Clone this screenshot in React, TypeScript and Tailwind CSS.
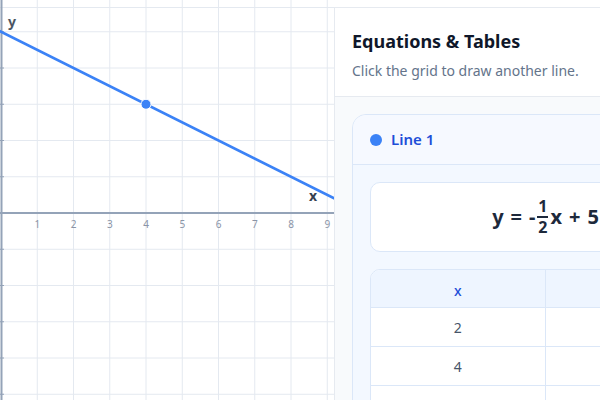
import React from "react";

const U = 36.25;
const X0 = 1;
const Y0 = 213;
const px = (x: number) => X0 + x * U;
const py = (y: number) => Y0 - y * U;

function Graph() {
  const xs = Array.from({ length: 10 }, (_, i) => i + 1);
  const ys = Array.from({ length: 11 }, (_, i) => i - 5).filter((v) => v !== 0);
  const f = (x: number) => -0.5 * x + 5;
  const xa = -0.1;
  const xb = 9.3;
  return (
    <svg width={334} height={400} className="block shrink-0">
      <rect x={0} y={0} width={334} height={400} fill="#ffffff" />
      {xs.map((k) => (
        <line key={`v${k}`} x1={px(k)} y1={0} x2={px(k)} y2={400} stroke="#e4e9f0" strokeWidth={1} />
      ))}
      {ys.map((k) => (
        <line key={`h${k}`} x1={0} y1={py(k)} x2={334} y2={py(k)} stroke="#e4e9f0" strokeWidth={1} />
      ))}
      <line x1={0} y1={7.5} x2={334} y2={7.5} stroke="#e4e9f0" strokeWidth={1} />
      {/* axes */}
      <line x1={0} y1={Y0} x2={334} y2={Y0} stroke="#94a3b8" strokeWidth={2} />
      <line x1={1.5} y1={0} x2={1.5} y2={400} stroke="#94a3b8" strokeWidth={2} />
      {ys.map((k) => (
        <line key={`t${k}`} x1={0} y1={py(k)} x2={4} y2={py(k)} stroke="#94a3b8" strokeWidth={1} />
      ))}
      {xs.slice(0, 9).map((k) => (
        <text
          key={`l${k}`}
          x={px(k)}
          y={228}
          textAnchor="middle"
          fontSize={10}
          fill="#8a94a6"
          fontFamily="'Noto Sans', sans-serif"
        >
          {k}
        </text>
      ))}
      <text x={8} y={27} fontSize={14} fontWeight={700} fill="#4b5563" fontFamily="'Noto Sans', sans-serif">
        y
      </text>
      <text x={309} y={201} fontSize={14} fontWeight={700} fill="#374151" fontFamily="'Noto Sans', sans-serif">
        x
      </text>
      <line x1={px(xa)} y1={py(f(xa))} x2={px(xb)} y2={py(f(xb))} stroke="#3b82f6" strokeWidth={2.5} />
      <circle cx={px(4)} cy={py(3)} r={5} fill="#3b82f6" stroke="#ffffff" strokeWidth={1} />
    </svg>
  );
}

const rows = [2, 4, 6];

export default function App() {
  return (
    <div
      className="w-[600px] h-[400px] overflow-hidden flex bg-white"
      style={{ fontFamily: "'Noto Sans', 'Open Sans', sans-serif" }}
    >
      <Graph />

      <div className="w-[422px] shrink-0 mt-[7px] border-t border-l border-[#e6eaf0] flex flex-col">
        {/* header */}
        <div className="px-[17px] pt-[19px] pb-[15px] border-b border-[#e6eaf0] bg-white">
          <h2 className="text-[18px] leading-[28px] font-bold text-[#0f172a]">Equations &amp; Tables</h2>
          <p className="mt-[6px] text-[14px] leading-[20px] text-[#64748b]">Click the grid to draw another line.</p>
        </div>

        <div className="flex-1 bg-[#f8fafc] px-[17px] pt-[17px]">
          <div className="rounded-[14px] border border-[#dbe7f8] overflow-hidden bg-[#f3f8ff]">
            <div className="h-[50px] flex items-center gap-[9px] pl-[17px] border-b border-[#dbe7f8] bg-[#f6f9ff]">
              <span className="w-[12px] h-[12px] rounded-full bg-[#3b82f6]" />
              <span className="text-[15px] font-semibold text-[#1d4ed8]">Line 1</span>
            </div>

            <div className="p-[17px] flex flex-col gap-[17px]">
              <div className="h-[70px] rounded-[10px] border border-[#dbe7f8] bg-white flex items-center justify-center">
                <div className="flex items-center text-[20px] font-bold text-[#1e293b] gap-[7px]">
                  <span>y</span>
                  <span>=</span>
                  <span className="flex items-center">
                    <span>-</span>
                    <span className="inline-flex flex-col items-center ml-[2px] text-[16px] leading-[17px]">
                      <span>1</span>
                      <span className="w-[11px] h-[2px] my-[1px] bg-[#1e293b]" />
                      <span>2</span>
                    </span>
                    <span className="ml-[2px]">x</span>
                  </span>
                  <span>+</span>
                  <span>5</span>
                </div>
              </div>

              <div className="rounded-[10px] border border-[#dbe7f8] bg-white overflow-hidden">
                <div className="grid grid-cols-2 h-[38px] bg-[#eef5ff] border-b border-[#dbe7f8]">
                  <div className="flex items-center justify-center pt-[3px] text-[14px] font-medium text-[#1d4ed8] border-r border-[#dbe7f8]">
                    x
                  </div>
                  <div className="flex items-center justify-center pt-[3px] text-[14px] font-medium text-[#1d4ed8]">y</div>
                </div>
                {rows.map((x) => (
                  <div key={x} className="grid grid-cols-2 h-[39px] border-b border-[#dbe7f8]">
                    <div className="flex items-center justify-center text-[14px] text-[#475569] border-r border-[#dbe7f8]">
                      {x}
                    </div>
                    <div className="flex items-center justify-center text-[14px] text-[#475569]">{-0.5 * x + 5}</div>
                  </div>
                ))}
              </div>
            </div>
          </div>
        </div>
      </div>
    </div>
  );
}
